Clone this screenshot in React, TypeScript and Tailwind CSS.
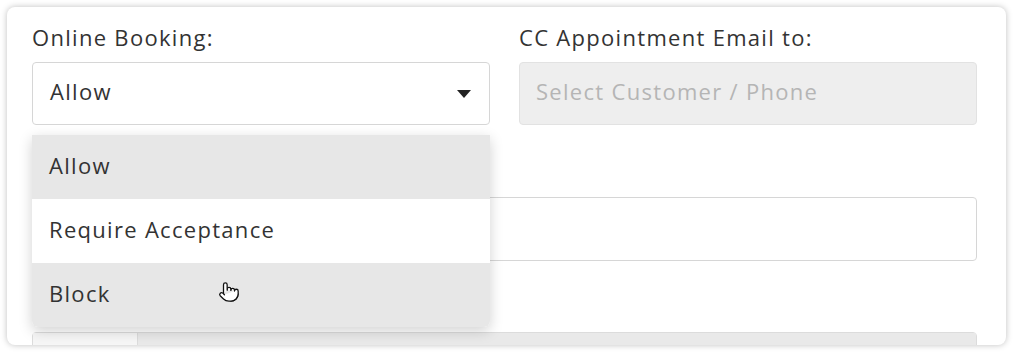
import { Pointer } from 'lucide-react';

const options = ['Allow', 'Require Acceptance', 'Block'];

const font = { fontFamily: '"Open Sans", Lato, sans-serif' };

export default function App() {
  const highlighted = [true, false, true];

  return (
    <div className="w-[1015px] h-[353px] bg-white pt-[7px] pl-[7px]" style={font}>
      <div className="relative w-[999px] h-[338px] overflow-hidden rounded-lg bg-white pl-[25px] pr-[29px] pt-[15px] shadow-[0_0_6px_rgba(0,0,0,0.25)]">
        {/* first row */}
        <div className="grid grid-cols-2 gap-[29px]">
          <div className="relative">
            <label className="block text-[22px] tracking-[1.3px] leading-[30px] text-[#333] mb-[10px]">Online Booking:</label>
            <div className="flex h-[63px] items-center justify-between rounded border border-[#d6d6d6] bg-white pb-[4px] pl-[17px] pr-[18px]">
              <span className="text-[22px] tracking-[1.3px] text-[#333]">Allow</span>
              <svg width="14" height="8" viewBox="0 0 14 8" className="mt-[4px]">
                <path d="M0 0 L14 0 L7 8 Z" fill="#222" />
              </svg>
            </div>

            {/* open menu */}
            <div className="absolute left-0 right-0 top-[113px] z-10 overflow-hidden rounded-b-md bg-white shadow-[0_4px_14px_rgba(0,0,0,0.18)]">
              {options.map((opt, i) => (
                <div
                  key={opt}
                  className={`relative flex h-[64px] items-center pb-[4px] pl-[17px] text-[22px] tracking-[1.3px] text-[#333] ${highlighted[i] ? 'bg-[#e7e7e7]' : 'bg-white'}`}
                >
                  {opt}
                  {opt === 'Block' && (
                    <Pointer
                      size={22}
                      strokeWidth={1.4}
                      className="absolute left-[186px] top-[18px] fill-white text-[#111]"
                    />
                  )}
                </div>
              ))}
            </div>
          </div>

          <div>
            <label className="block text-[22px] tracking-[1.3px] leading-[30px] text-[#333] mb-[10px]">CC Appointment Email to:</label>
            <div className="flex h-[63px] items-center rounded border border-[#e2e2e2] bg-[#eeeeee] pb-[4px] pl-[16px]">
              <span className="text-[22px] tracking-[1.3px] text-[#b5b5b5]">Select Customer / Phone</span>
            </div>
          </div>
        </div>

        {/* second row, its label sits under the open menu */}
        <div className="mt-[22px]">
          <div className="h-[30px] mb-[20px]" />
          <div className="h-[64px] rounded border border-[#d6d6d6] bg-white" />
        </div>

        {/* third row */}
        <div className="mt-[22px]">
          <div className="h-[30px] mb-[19px]" />
          <div className="flex h-[40px] rounded border border-[#dcdcdc]">
            <div className="w-[105px] bg-[#f6f6f6] border-r border-[#dcdcdc]" />
            <div className="flex-1 bg-[#e9e9e9]" />
          </div>
        </div>
      </div>
    </div>
  );
}
